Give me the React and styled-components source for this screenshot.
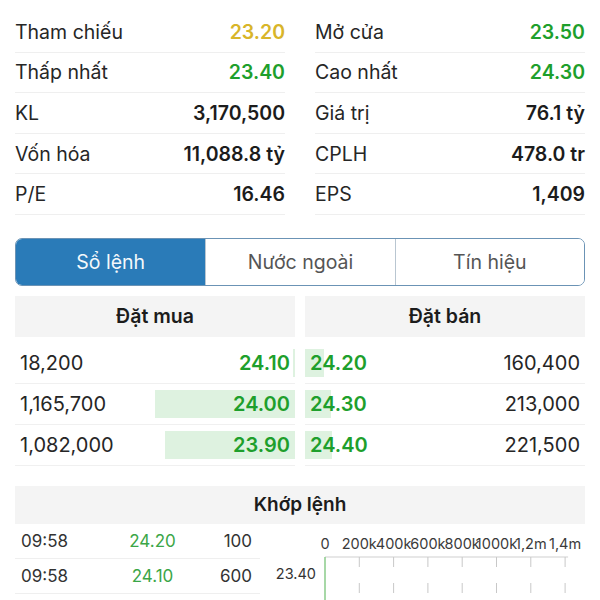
import React from "react";
import styled, { createGlobalStyle } from "styled-components";

const Global = createGlobalStyle`
  html, body { margin: 0; padding: 0; background: #fff; }
  body { font-family: Inter, "Noto Sans", Roboto, sans-serif; color: #1c1c1c; }
  * { box-sizing: border-box; }
`;

const Page = styled.div`
  width: 600px;
  height: 600px;
  overflow: hidden;
  padding: 12px 15px 0;
`;

const StatsGrid = styled.div`
  display: grid;
  grid-template-columns: 1fr 1fr;
  column-gap: 30px;
`;

const StatCol = styled.div`
  display: flex;
  flex-direction: column;
`;

const StatRow = styled.div`
  height: 40.6px;
  display: flex;
  align-items: center;
  justify-content: space-between;
  border-bottom: 1px solid #efefef;
  font-size: 19.5px;
`;

const StatLabel = styled.span`
  color: #262626;
`;

const StatValue = styled.span`
  font-weight: 600;
  color: ${(p) => p.$color || "#1c1c1c"};
`;

const Tabs = styled.div`
  margin-top: 23px;
  height: 48px;
  display: grid;
  grid-template-columns: 1fr 1fr 1fr;
  border: 1.5px solid #6b93b5;
  border-radius: 7px;
  overflow: hidden;
`;

const Tab = styled.div`
  display: flex;
  align-items: center;
  justify-content: center;
  font-size: 19.5px;
  background: ${(p) => (p.$active ? "#2a7bb8" : "#fff")};
  color: ${(p) => (p.$active ? "#f4f8fb" : "#555")};
  & + & {
    border-left: 1px solid #b9c6d1;
  }
`;

const BookGrid = styled.div`
  margin-top: 10px;
  display: grid;
  grid-template-columns: 1fr 1fr;
  column-gap: 10px;
`;

const BookCol = styled.div`
  display: flex;
  flex-direction: column;
`;

const PanelHeader = styled.div`
  height: 41px;
  background: #f4f4f4;
  display: flex;
  align-items: center;
  justify-content: center;
  font-weight: 600;
  font-size: 19.5px;
  color: #1c1c1c;
  margin-bottom: ${(p) => p.$gap || 0}px;
`;

const BookRow = styled.div`
  height: 41px;
  display: flex;
  align-items: center;
  justify-content: space-between;
  border-bottom: 1px solid #f0f0f0;
  position: relative;
  font-size: 20px;
  padding: 0 5px;
`;

const Bar = styled.div`
  position: absolute;
  top: 6px;
  bottom: 6px;
  ${(p) => (p.$side === "buy" ? "right: 0;" : "left: 0;")}
  background: #def2e0;
  z-index: 0;
`;

const Vol = styled.span`
  position: relative;
  z-index: 1;
  color: #262626;
`;

const Price = styled.span`
  position: relative;
  z-index: 1;
  font-weight: 600;
  color: #1e9f2c;
`;

const MatchSection = styled.div`
  margin-top: 20px;
`;

const MatchHeader = styled.div`
  height: 38px;
  background: #f4f4f4;
  display: flex;
  align-items: center;
  justify-content: center;
  font-weight: 600;
  font-size: 19px;
  color: #1c1c1c;
`;

const MatchBody = styled.div`
  display: grid;
  grid-template-columns: 245px 1fr;
`;

const TradeTable = styled.div`
  display: flex;
  flex-direction: column;
`;

const TradeRow = styled.div`
  height: 35px;
  display: grid;
  grid-template-columns: 84px 95px 1fr;
  align-items: center;
  border-bottom: 1px solid #efefef;
  font-size: 17px;
  color: #333;
  padding: 0 8px 0 6px;
`;

const TradePrice = styled.span`
  color: #3ba647;
  text-align: center;
`;

const TradeVol = styled.span`
  text-align: right;
`;

const ChartWrap = styled.div`
  height: 80px;
`;

const stats = [
  [
    ["Tham chiếu", "23.20", "#d8b52a"],
    ["Thấp nhất", "23.40", "#1e9f2c"],
    ["KL", "3,170,500"],
    ["Vốn hóa", "11,088.8 tỷ"],
    ["P/E", "16.46"],
  ],
  [
    ["Mở cửa", "23.50", "#1e9f2c"],
    ["Cao nhất", "24.30", "#1e9f2c"],
    ["Giá trị", "76.1 tỷ"],
    ["CPLH", "478.0 tr"],
    ["EPS", "1,409"],
  ],
];

const buys = [
  [18200, "18,200", "24.10"],
  [1165700, "1,165,700", "24.00"],
  [1082000, "1,082,000", "23.90"],
];
const sells = [
  [160400, "160,400", "24.20"],
  [213000, "213,000", "24.30"],
  [221500, "221,500", "24.40"],
];
const SCALE = 0.00012;

const trades = [
  ["09:58", "24.20", "100"],
  ["09:58", "24.10", "600"],
];

const ticks = ["0", "200k", "400k", "600k", "800k", "1000k", "1,2m", "1,4m"];

function Chart() {
  const x0 = 65;
  const step = 34.3;
  return (
    <svg width="325" height="80" viewBox="0 0 325 80">
      {ticks.map((t, i) => (
        <text
          key={t}
          x={x0 + i * step}
          y={25}
          textAnchor="middle"
          fontSize="14.5"
          fontFamily="Inter, sans-serif"
          fill="#3a3a3a"
        >
          {t}
        </text>
      ))}
      <line x1={x0} y1={33} x2={x0 + 7 * step + 3} y2={33} stroke="#cfcfcf" strokeWidth="1.2" />
      {ticks.slice(1).map((t, i) => (
        <line
          key={t}
          x1={x0 + (i + 1) * step}
          y1={33}
          x2={x0 + (i + 1) * step}
          y2={80}
          stroke="#c8c8c8"
          strokeWidth="1"
          strokeDasharray="10 16"
        />
      ))}
      <line x1={x0} y1={33} x2={x0} y2={80} stroke="#8acb8a" strokeWidth="1.5" />
      <text x={x0 - 9} y={55} textAnchor="end" fontSize="14.5" fontFamily="Inter, sans-serif" fill="#333">
        23.40
      </text>
    </svg>
  );
}

export default function App() {
  return (
    <>
      <Global />
      <Page>
        <StatsGrid>
          {stats.map((col, ci) => (
            <StatCol key={ci}>
              {col.map(([l, v, c]) => (
                <StatRow key={l}>
                  <StatLabel>{l}</StatLabel>
                  <StatValue $color={c}>{v}</StatValue>
                </StatRow>
              ))}
            </StatCol>
          ))}
        </StatsGrid>

        <Tabs>
          <Tab $active>Sổ lệnh</Tab>
          <Tab>Nước ngoài</Tab>
          <Tab>Tín hiệu</Tab>
        </Tabs>

        <BookGrid>
          <BookCol>
            <PanelHeader $gap={6}>Đặt mua</PanelHeader>
            {buys.map(([n, v, p]) => (
              <BookRow key={p}>
                <Bar $side="buy" style={{ width: Math.max(2, n * SCALE) }} />
                <Vol>{v}</Vol>
                <Price>{p}</Price>
              </BookRow>
            ))}
          </BookCol>
          <BookCol>
            <PanelHeader $gap={6}>Đặt bán</PanelHeader>
            {sells.map(([n, v, p]) => (
              <BookRow key={p}>
                <Bar $side="sell" style={{ width: n * SCALE }} />
                <Price>{p}</Price>
                <Vol>{v}</Vol>
              </BookRow>
            ))}
          </BookCol>
        </BookGrid>

        <MatchSection>
          <MatchHeader>Khớp lệnh</MatchHeader>
          <MatchBody>
            <TradeTable>
              {trades.map(([t, p, v], i) => (
                <TradeRow key={i}>
                  <span>{t}</span>
                  <TradePrice>{p}</TradePrice>
                  <TradeVol>{v}</TradeVol>
                </TradeRow>
              ))}
            </TradeTable>
            <ChartWrap>
              <Chart />
            </ChartWrap>
          </MatchBody>
        </MatchSection>
      </Page>
    </>
  );
}
